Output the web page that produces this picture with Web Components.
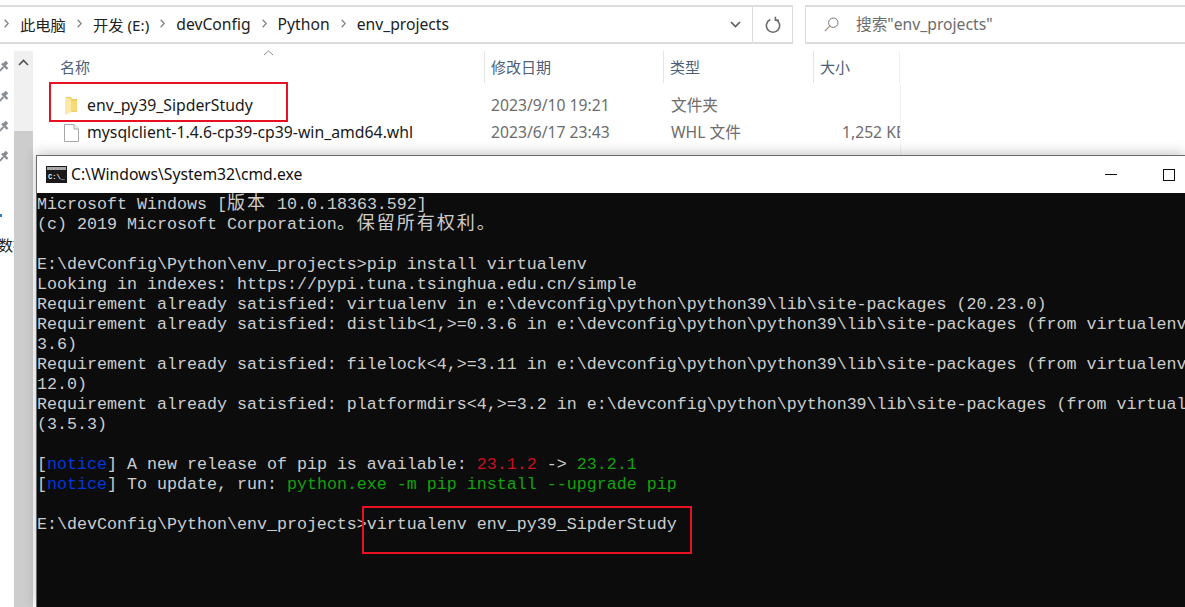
<!DOCTYPE html>
<html lang="zh">
<head>
<meta charset="utf-8">
<title>cmd</title>
<style>
  html, body { margin: 0; padding: 0; background: #fff; }
  body { width: 1185px; height: 607px; overflow: hidden; position: relative; font-family: "Noto Sans", "Noto Sans CJK SC", sans-serif; }
</style>
</head>
<body>
<x-explorer>
  <x-address-bar slot="bar" search='搜索"env_projects"'>
    <x-crumb small>此电脑</x-crumb>
    <x-crumb small>开发 (E:)</x-crumb>
    <x-crumb>devConfig</x-crumb>
    <x-crumb>Python</x-crumb>
    <x-crumb>env_projects</x-crumb>
  </x-address-bar>
  <x-file-row icon="folder" name="env_py39_SipderStudy" date="2023/9/10 19:21" type="文件夹"></x-file-row>
  <x-file-row icon="file" name="mysqlclient-1.4.6-cp39-cp39-win_amd64.whl" date="2023/6/17 23:43" type="WHL 文件" size="1,252 KB"></x-file-row>
</x-explorer>

<x-cmd-window title-text="C:\Windows\System32\cmd.exe">
  <x-term-line>Microsoft Windows [<x-cjk>版本</x-cjk> 10.0.18363.592]</x-term-line>
  <x-term-line>(c) 2019 Microsoft Corporation<x-cjk>。保留所有权利。</x-cjk></x-term-line>
  <x-term-line></x-term-line>
  <x-term-line>E:\devConfig\Python\env_projects&gt;pip install virtualenv</x-term-line>
  <x-term-line>Looking in indexes: https://pypi.tuna.tsinghua.edu.cn/simple</x-term-line>
  <x-term-line>Requirement already satisfied: virtualenv in e:\devconfig\python\python39\lib\site-packages (20.23.0)</x-term-line>
  <x-term-line>Requirement already satisfied: distlib&lt;1,&gt;=0.3.6 in e:\devconfig\python\python39\lib\site-packages (from virtualenv)</x-term-line>
  <x-term-line>3.6)</x-term-line>
  <x-term-line>Requirement already satisfied: filelock&lt;4,&gt;=3.11 in e:\devconfig\python\python39\lib\site-packages (from virtualenv)</x-term-line>
  <x-term-line>12.0)</x-term-line>
  <x-term-line>Requirement already satisfied: platformdirs&lt;4,&gt;=3.2 in e:\devconfig\python\python39\lib\site-packages (from virtual)</x-term-line>
  <x-term-line>(3.5.3)</x-term-line>
  <x-term-line></x-term-line>
  <x-term-line>[<span style="color:#0037da">notice</span>] A new release of pip is available: <span style="color:#c50f1f">23.1.2</span> -&gt; <span style="color:#13a10e">23.2.1</span></x-term-line>
  <x-term-line>[<span style="color:#0037da">notice</span>] To update, run: <span style="color:#13a10e">python.exe -m pip install --upgrade pip</span></x-term-line>
  <x-term-line></x-term-line>
  <x-term-line>E:\devConfig\Python\env_projects&gt;virtualenv env_py39_SipderStudy</x-term-line>
</x-cmd-window>

<x-red-box style="left:49px;top:82px;width:235px;height:36px"></x-red-box>
<x-red-box style="left:362px;top:506px;width:326px;height:44px"></x-red-box>

<script>
const pinIcon = `<svg width="11" height="13" viewBox="0 0 11 13"><g fill="none" stroke="#868c93"><path d="M.5 11 4.5 7" stroke-width="1.8"/><path d="M3 3.5 8.5 9" stroke-width="2.4"/><path d="M5 5 8 2" stroke-width="3.4"/></g></svg>`;

class XExplorer extends HTMLElement {
  constructor() {
    super();
    this.attachShadow({ mode: 'open' });
    const pins = pinIcon.repeat(4).replace(/<svg/g, '<div class="pin"><svg').replace(/<\/svg>/g, '</svg></div>');
    this.shadowRoot.innerHTML = `
      <style>
        :host {
          display: block;
          --cols: 451px 179px 150px 87px;
          padding-top: 5px;
          height: 602px;
          overflow: hidden;
        }
        .main {
          display: flex;
          margin-top: 7px;
          height: 556px;
        }
        .rail {
          width: 14px;
          overflow: hidden;
          padding-top: 0;
        }
        .pin { height: 30px; display: flex; align-items: center; margin-left: -1px; position: relative; top: 0; }
        .mark { width: 2px; height: 3px; background: #2a7fd4; margin-top: 43px; margin-bottom: 18px; }
        .cut { font: 15px/20px "Noto Sans CJK SC", sans-serif; color: #222; white-space: nowrap; margin-left: -2px; }
        .scroll {
          width: 19px;
          background: #f0f0f0;
          display: flex;
          flex-direction: column;
        }
        .up { height: 80px; display: flex; justify-content: center; padding-top: 8px; box-sizing: border-box; }
        .thumb { flex: 1; background: #cdcdcd; }
        .list { flex: 1; }
        .head { display: grid; grid-template-columns: var(--cols); height: 32px; position: relative; }
        .head div {
          font: 15px/32px "Noto Sans CJK SC", sans-serif;
          color: #4c607a;
          box-sizing: border-box;
        }
        .head div + div { border-left: 1px solid #e5e5e5; padding-left: 6px; }
        .head .name { padding-left: 27px; position: relative; }
        .head .name svg { position: absolute; left: 230px; top: -1px; }
        .head .size { border-right: 1px solid #f0f0f0; }
        .rows { padding-top: 9px; width: 867px; height: 72px; border-right: 1px solid #f0f0f0; }
      </style>
      <slot name="bar"></slot>
      <div class="main">
        <div class="rail">
          ${pins}
          <div class="mark"></div>
          <div class="cut">数据</div>
        </div>
        <div class="scroll">
          <div class="up"><svg width="11" height="7" viewBox="0 0 11 7"><path d="M1 6 5.5 1.5 10 6" fill="none" stroke="#505050" stroke-width="1.6"/></svg></div>
          <div class="thumb"></div>
        </div>
        <div class="list">
          <div class="head">
            <div class="name">名称<svg width="11" height="6" viewBox="0 0 11 6"><path d="M1 5 5.5 1 10 5" fill="none" stroke="#8a8a8a"/></svg></div>
            <div>修改日期</div>
            <div>类型</div>
            <div class="size">大小</div>
          </div>
          <div class="rows"><slot></slot></div>
        </div>
      </div>`;
  }
}

class XAddressBar extends HTMLElement {
  constructor() {
    super();
    this.attachShadow({ mode: 'open' });
    this.shadowRoot.innerHTML = `
      <style>
        :host { display: flex; gap: 12px; height: 39px; font: 15.7px "Noto Sans", "Noto Sans CJK SC", sans-serif; }
        .addr, .search {
          box-sizing: border-box;
          height: 39px;
          border: 1px solid #dcdcdc;
          border-width: 2px 1px;
          display: flex;
          align-items: center;
        }
        .addr { width: 793px; border-left: 0; }
        .crumbs { flex: 1; display: flex; align-items: center; margin-left: -7px; position: relative; top: -1px; }
        .chev { width: 35px; height: 100%; display: flex; align-items: center; justify-content: center; border-right: 1px solid #dcdcdc; box-sizing: border-box; }
        .refresh { width: 39px; height: 100%; display: flex; align-items: center; justify-content: center; }
        .search { flex: 1; border-right: 0; padding-left: 18px; gap: 17px; color: #6d6d6d; }
        .search span { position: relative; top: -1px; }
      </style>
      <div class="addr">
        <div class="crumbs"><slot></slot></div>
        <div class="chev"><svg width="11" height="7" viewBox="0 0 11 7"><path d="M1 1 5.5 5.5 10 1" fill="none" stroke="#5f5f5f" stroke-width="1.7"/></svg></div>
        <div class="refresh"><svg width="16" height="18" viewBox="0 0 16 18"><path d="M5.3 3.6A6.6 6.6 0 1 0 10.7 3.6M10.4 .8V4.2H14" fill="none" stroke="#6a6a6a" stroke-width="1.6"/></svg></div>
      </div>
      <div class="search">
        <svg width="15" height="15" viewBox="0 0 15 15"><circle cx="9.3" cy="5.7" r="4.7" fill="none" stroke="#777"/><path d="M5.8 9.2 .8 14.2" stroke="#a98d6a" stroke-width="1.2"/></svg>
        <span>${this.getAttribute('search')}</span>
      </div>`;
  }
}

class XCrumb extends HTMLElement {
  constructor() {
    super();
    this.attachShadow({ mode: 'open' });
    this.shadowRoot.innerHTML = `
      <style>
        :host { display: inline-flex; align-items: center; color: #222; white-space: nowrap; }
        :host([small]) { font-size: 15.3px; }
        svg { margin: 0 11px; flex: none; }
      </style>
      <svg width="5" height="9" viewBox="0 0 5 9"><path d="M.7 .7 4.2 4.5 .7 8.3" fill="none" stroke="#808080" stroke-width="1.3"/></svg>
      <slot></slot>`;
  }
}

class XFileRow extends HTMLElement {
  constructor() {
    super();
    this.attachShadow({ mode: 'open' });
    const icons = {
      folder: `<svg width="15" height="20" viewBox="0 0 15 20"><path fill="#f0cf62" d="M1 1H7L8 3H13V16H1Z"/><path fill="#fbe9a6" d="M1 1 7 3V16L1 19Z"/><path fill="#f6da78" d="M7 5H13V15H7Z"/></svg>`,
      file: `<svg width="15" height="18" viewBox="0 0 15 18"><path d="M.5 .5H10L14.5 5V17.5H.5Z" fill="#fff" stroke="#a8a8a8"/><path d="M10 .5V5H14.5" fill="#f2f2f2" stroke="#a8a8a8"/></svg>`
    };
    const a = n => this.getAttribute(n) || '';
    this.shadowRoot.innerHTML = `
      <style>
        :host {
          display: grid;
          grid-template-columns: var(--cols);
          height: 27px;
          font: 15.7px/27px "Noto Sans", "Noto Sans CJK SC", sans-serif;
          color: #6d6d6d;
          white-space: nowrap;
        }
        .name { color: #1a1a1a; padding-left: 31px; display: flex; align-items: center; gap: 8px; font-size: 15.8px; }
        .date { padding-left: 7px; }
        .type { padding-left: 8px; }
        .size { padding-left: 29px; overflow: hidden; }
      </style>
      <div class="name">${icons[a('icon')]}<span>${a('name')}</span></div>
      <div class="date">${a('date')}</div>
      <div class="type">${a('type')}</div>
      <div class="size">${a('size')}</div>`;
  }
}

class XCmdWindow extends HTMLElement {
  constructor() {
    super();
    this.attachShadow({ mode: 'open' });
    this.shadowRoot.innerHTML = `
      <style>
        :host {
          position: absolute;
          left: 36px;
          top: 155px;
          width: 1149px;
          height: 452px;
          box-sizing: border-box;
          border: solid #6b6b6b;
          border-width: 1px 0 0 1px;
          box-shadow: 0 -2px 12px rgba(0,0,0,.22);
          background: #fff;
          display: flex;
          flex-direction: column;
        }
        .title {
          flex: none;
          height: 37px;
          display: flex;
          align-items: center;
          padding-left: 9px;
          gap: 4px;
          font: 15.7px "Noto Sans", sans-serif;
          color: #111;
        }
        .title span { flex: 1; position: relative; top: -1px; }
        .btn { width: 58px; flex: none; display: flex; justify-content: center; align-items: center; margin-left: -4px; }
        .btn:last-child { margin-right: -13px; }
        .term {
          flex: 1;
          background: #0c0c0c;
          color: #ccc;
          padding-top: 2px;
          overflow: hidden;
        }
        .glyph { font: 700 7px/9px "Liberation Mono", monospace; fill: #eee; }
      </style>
      <div class="title">
        <svg width="21" height="17" viewBox="0 0 21 17"><rect width="21" height="17" fill="#1a1a1a"/><rect x="1" y="1" width="19" height="3" fill="#a8a8a8"/><text x="2" y="13" class="glyph">C:\\_</text></svg>
        <span>${this.getAttribute('title-text')}</span>
        <div class="btn"><svg width="12" height="2"><rect width="12" height="1" y="0" fill="#111"/></svg></div>
        <div class="btn"><svg width="12" height="12"><rect x=".5" y=".5" width="11" height="11" fill="none" stroke="#111"/></svg></div>
      </div>
      <div class="term"><slot></slot></div>`;
  }
}

// white-space: pre reaches into the shadow tree, so no whitespace around style and slot here
class XTermLine extends HTMLElement {
  constructor() {
    super();
    this.attachShadow({ mode: 'open' });
    this.shadowRoot.innerHTML = `<style>
        :host {
          display: block;
          height: 20px;
          font: 16.667px/20px "Liberation Mono", monospace;
          white-space: pre;
        }
      </style><slot></slot>`;
  }
}

class XCjk extends HTMLElement {
  constructor() {
    super();
    this.attachShadow({ mode: 'open' });
    this.shadowRoot.innerHTML = `<style>
        :host {
          font: 18px/0 "Noto Sans CJK SC", sans-serif;
          letter-spacing: 2px;
        }
      </style><slot></slot>`;
  }
}

class XRedBox extends HTMLElement {
  constructor() {
    super();
    this.attachShadow({ mode: 'open' });
    this.shadowRoot.innerHTML = `
      <style>
        :host { position: absolute; display: block; border: 2px solid #e81123; z-index: 5; }
      </style>`;
  }
}

customElements.define('x-explorer', XExplorer);
customElements.define('x-address-bar', XAddressBar);
customElements.define('x-crumb', XCrumb);
customElements.define('x-file-row', XFileRow);
customElements.define('x-cmd-window', XCmdWindow);
customElements.define('x-term-line', XTermLine);
customElements.define('x-cjk', XCjk);
customElements.define('x-red-box', XRedBox);
</script>
</body>
</html>
